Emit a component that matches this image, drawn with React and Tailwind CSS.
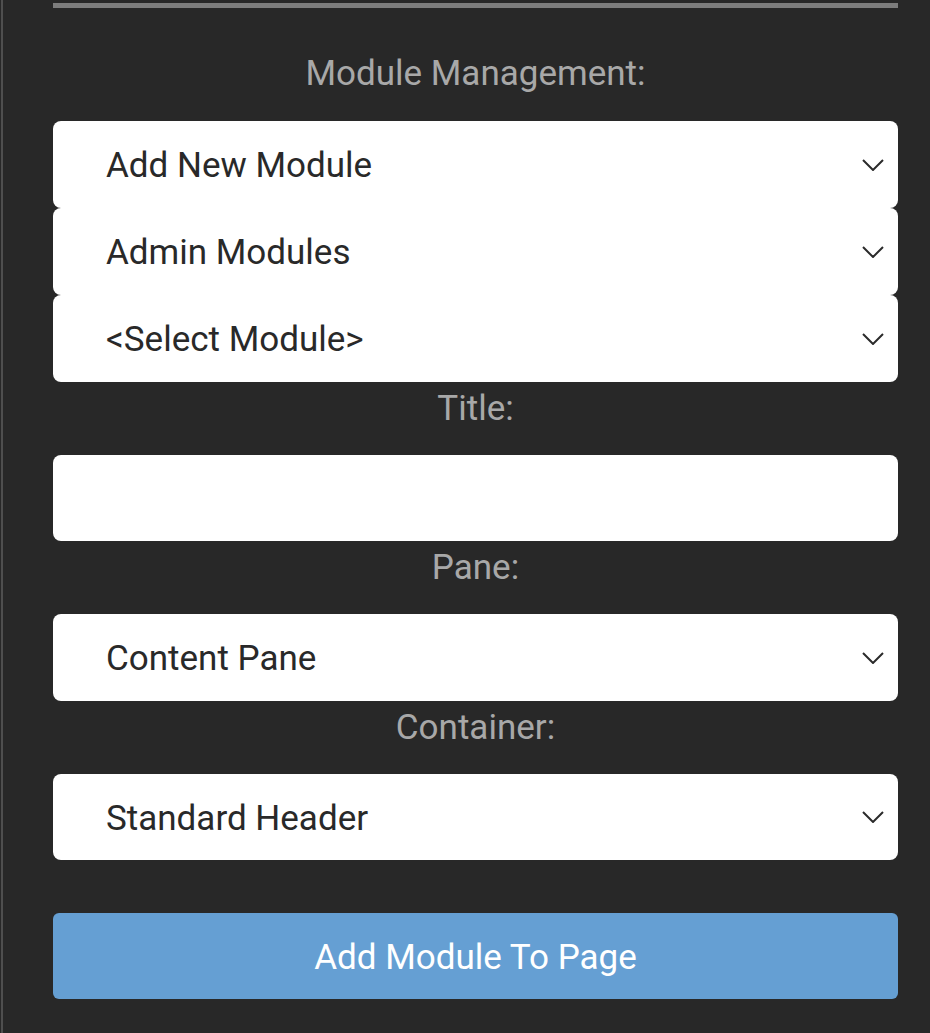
import { useState } from "react";

const Chevron = () => (
  <svg width="22" height="12" viewBox="0 0 22 12" fill="none" className="shrink-0">
    <polyline points="1,1 11,11 21,1" stroke="#2b2b2b" strokeWidth="2" />
  </svg>
);

const SelectBox = ({ value, h = "h-[87px]" }) => (
  <div className={`flex items-center justify-between ${h} bg-white rounded-lg pl-[53px] pr-[14px] text-[35px] text-[#292929]`}>
    <span className="mt-[4px]">{value}</span>
    <Chevron />
  </div>
);

const Label = ({ children }) => (
  <div className="h-[73px] pt-[3px] text-center leading-[48px] text-[35px] text-[#a8a8a8]">
    {children}
  </div>
);

const App = () => {
  const [title, setTitle] = useState("");
  return (
    <div className="flex w-[930px] h-[1033px] bg-[#282828] font-['Roboto',sans-serif] overflow-hidden">
      <div className="w-[1px] shrink-0" />
      <div className="w-[2px] shrink-0 bg-[#4f4f4f]" />
      <div className="flex-1 pl-[50px] pr-[32px]">
        <div className="mt-[3px] h-[5px] bg-[#7d7d7d]" />
        <div className="h-[113px] pt-[42px] text-center leading-[48px] text-[35px] text-[#a8a8a8]">
          Module Management:
        </div>
        <SelectBox value="Add New Module" />
        <SelectBox value="Admin Modules" />
        <SelectBox value="<Select Module>" />
        <Label>Title:</Label>
        <input
          value={title}
          onChange={(e) => setTitle(e.target.value)}
          className="block w-full h-[86px] bg-white rounded-lg px-[53px] text-[35px] text-[#292929] outline-none"
        />
        <Label>Pane:</Label>
        <SelectBox value="Content Pane" />
        <Label>Container:</Label>
        <SelectBox value="Standard Header" h="h-[86px]" />
        <button className="mt-[53px] w-full h-[86px] pt-[4px] bg-[#659fd3] rounded-md text-white text-[35px]">
          Add Module To Page
        </button>
      </div>
    </div>
  );
};

export default App;
